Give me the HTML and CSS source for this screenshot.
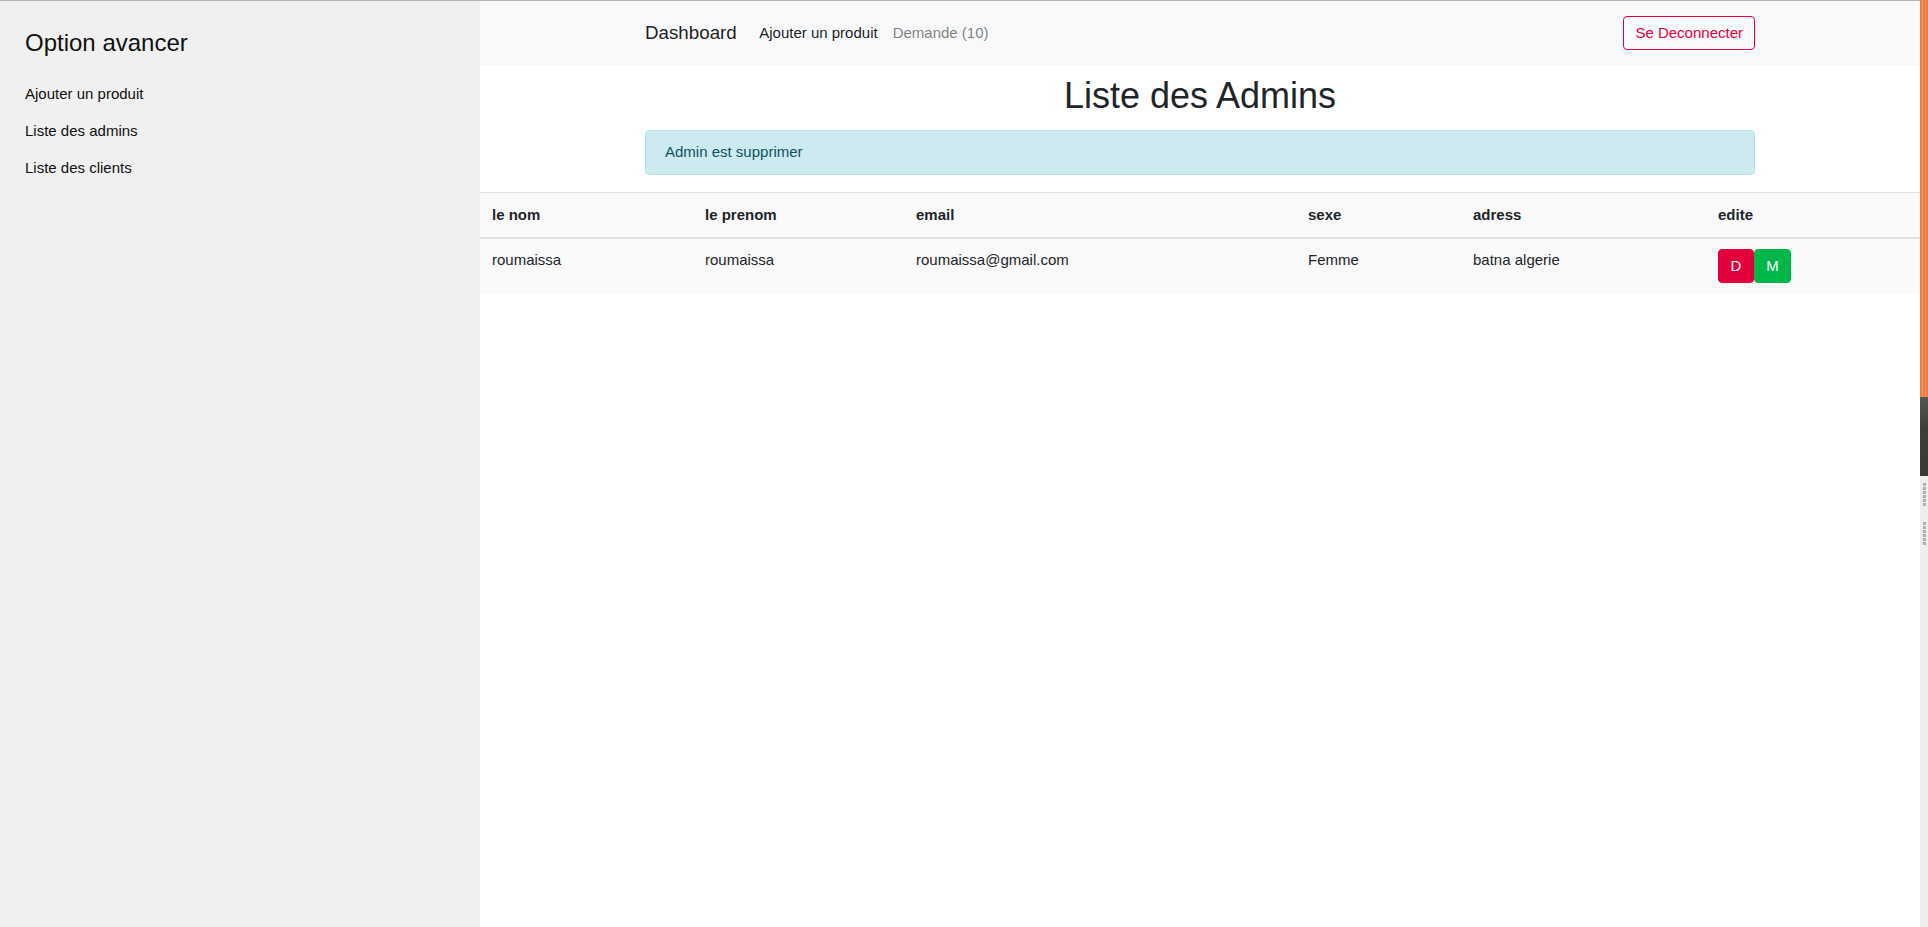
FILE: index.html
```html
<!DOCTYPE html>
<html lang="fr">
<head>
<meta charset="utf-8">
<title>Liste des Admins</title>
<link rel="stylesheet" href="styles.css">
</head>
<body>
<div class="app">
  <aside class="sidebar">
    <h4 class="side-title">Option avancer</h4>
    <ul class="side-links">
      <li><a href="#">Ajouter un produit</a></li>
      <li><a href="#">Liste des admins</a></li>
      <li><a href="#">Liste des clients</a></li>
    </ul>
  </aside>
  <main class="main">
    <nav class="navbar">
      <div class="container nav-inner">
        <a class="brand" href="#">Dashboard</a>
        <ul class="nav">
          <li><a class="nav-link" href="#">Ajouter un produit</a></li>
          <li><a class="nav-link muted" href="#">Demande (10)</a></li>
        </ul>
        <button class="btn-logout" type="button">Se Deconnecter</button>
      </div>
    </nav>
    <div class="container">
      <h1 class="page-title">Liste des Admins</h1>
      <div class="alert">Admin est supprimer</div>
    </div>
    <table class="table">
      <colgroup>
        <col class="c1"><col class="c2"><col class="c3"><col class="c4"><col class="c5"><col class="c6">
      </colgroup>
      <thead>
        <tr><th>le nom</th><th>le prenom</th><th>email</th><th>sexe</th><th>adress</th><th>edite</th></tr>
      </thead>
      <tbody>
        <tr>
          <td>roumaissa</td>
          <td>roumaissa</td>
          <td>roumaissa@gmail.com</td>
          <td>Femme</td>
          <td>batna algerie</td>
          <td><div class="actions"><button class="btn btn-d" type="button">D</button><button class="btn btn-m" type="button">M</button></div></td>
        </tr>
      </tbody>
    </table>
  </main>
</div>
<div class="strip">
  <div class="strip-orange"></div>
  <div class="strip-dark"></div>
  <div class="strip-light">
    <div class="grip"></div>
    <div class="grip grip2"></div>
  </div>
</div>
</body>
</html>
```
FILE: styles.css
```css
html, body {
  margin: 0;
  height: 100%;
}
body {
  display: flex;
  font-family: "Liberation Sans", Arial, sans-serif;
  font-size: 15px;
  color: #212529;
  background: #fff;
  overflow: hidden;
}
.app {
  flex: 1;
  display: flex;
  min-width: 0;
  border-top: 1px solid #b4b4b4;
}
.sidebar {
  width: 480px;
  flex: none;
  background: #f0f0f0;
  padding: 27px 0 0 25px;
  box-sizing: border-box;
}
.side-title {
  margin: 0;
  font-size: 24px;
  font-weight: normal;
  line-height: 29px;
  color: #111;
}
.side-links {
  list-style: none;
  margin: 18px 0 0;
  padding: 0;
}
.side-links a {
  display: block;
  font-size: 15px;
  line-height: 21px;
  padding: 8px 0;
  color: #111;
  text-decoration: none;
}
.main {
  flex: 1;
  min-width: 0;
  display: flex;
  flex-direction: column;
}
.navbar {
  background: #f8f9fa;
  height: 64px;
  display: flex;
  align-items: center;
}
.container {
  width: 1140px;
  margin: 0 auto;
  padding: 0 15px;
  box-sizing: border-box;
}
.nav-inner {
  display: flex;
  align-items: center;
}
.brand {
  font-size: 18.75px;
  line-height: 28px;
  margin-right: 15px;
  color: rgba(0, 0, 0, .9);
  text-decoration: none;
}
.nav {
  display: flex;
  list-style: none;
  margin: 0;
  padding: 0;
}
.nav-link {
  display: block;
  padding: 0 7.5px;
  line-height: 22px;
  color: rgba(0, 0, 0, .9);
  text-decoration: none;
}
.nav-link.muted {
  color: rgba(0, 0, 0, .5);
}
.btn-logout {
  margin-left: auto;
  font-family: inherit;
  font-size: 15px;
  line-height: 22.5px;
  padding: 5px 11px;
  border: 1px solid #e6003b;
  color: #e6003b;
  background: transparent;
  border-radius: 4px;
}
.page-title {
  margin: 9px 0 13px;
  text-align: center;
  font-size: 36px;
  font-weight: normal;
  line-height: 43px;
  color: #212529;
}
.alert {
  background: #cdeaf0;
  border: 1px solid #bbe3ea;
  color: #0c5460;
  border-radius: 4px;
  padding: 10px 19px;
  line-height: 22.5px;
  margin-bottom: 17px;
}
.table {
  width: 100%;
  table-layout: fixed;
  border-collapse: collapse;
  background: #fafafa;
}
.c1 { width: 213px; }
.c2 { width: 211px; }
.c3 { width: 392px; }
.c4 { width: 165px; }
.c5 { width: 245px; }
.table th,
.table td {
  padding: 11px 12px;
  text-align: left;
  vertical-align: top;
  line-height: 22px;
}
.table td {
  padding-top: 10.5px;
  padding-bottom: 10.5px;
}
.table thead th {
  font-weight: bold;
  border-top: 1px solid #dee2e6;
  border-bottom: 2px solid #dee2e6;
}
.actions {
  display: flex;
}
.btn {
  font-family: inherit;
  font-size: 15px;
  line-height: 22px;
  padding: 5px 11.5px;
  border-radius: 4px;
  color: #fff;
  border: 1px solid transparent;
}
.btn-d {
  background: #e4003a;
  border-color: #e4003a;
}
.btn-m {
  background: #00b84a;
  border-color: #00b84a;
}
.strip {
  width: 8px;
  flex: none;
  display: flex;
  flex-direction: column;
}
.strip-orange {
  height: 397px;
  background: linear-gradient(90deg, #ef7a46 0 2px, #f59a6e 2px 3px, #ef7a46 3px 5px, #f48e5e 5px 6px, #ef7a46 6px);
}
.strip-dark {
  height: 79px;
  background: linear-gradient(#56554f, #3e3e3a 40%, #383834);
}
.strip-light {
  flex: 1;
  background: #efeeec;
  padding-top: 7px;
}
.grip {
  width: 3px;
  height: 23px;
  margin-left: 3px;
  background: repeating-linear-gradient(#b0b0b0 0 3px, transparent 3px 4px);
}
.grip2 {
  margin-top: 16px;
}
```
